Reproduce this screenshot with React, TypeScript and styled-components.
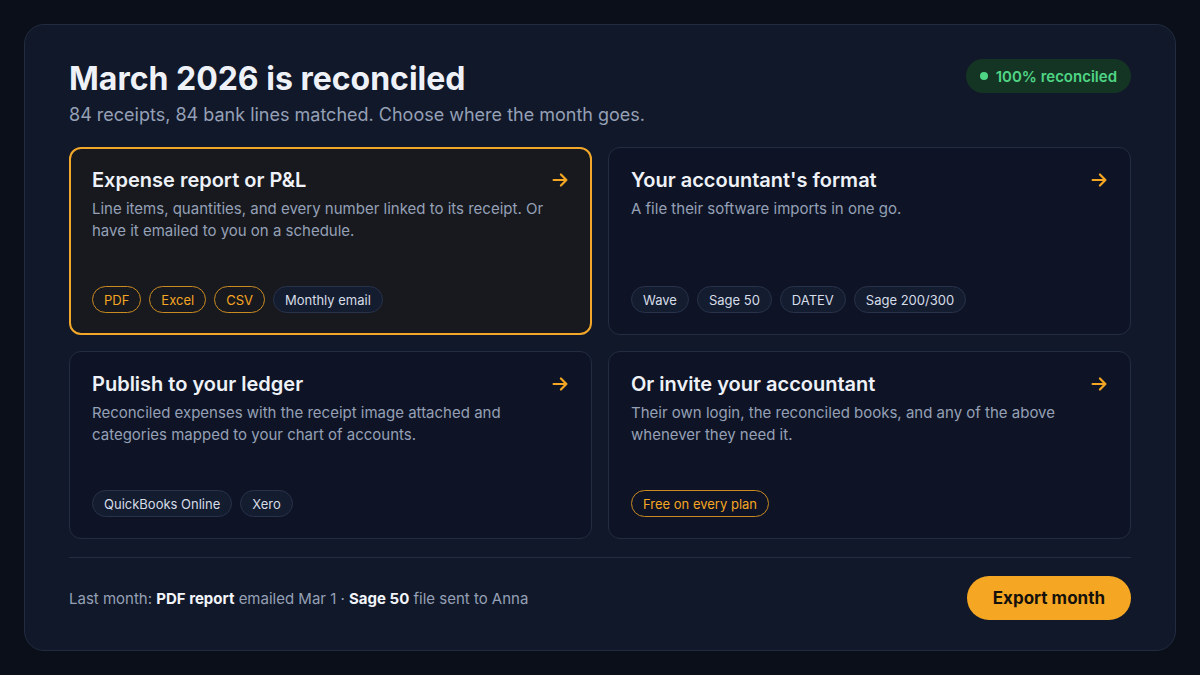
import styled, { createGlobalStyle } from "styled-components";

type Option = {
  title: string;
  text: string;
  chips: { label: string; accent?: boolean }[];
  active?: boolean;
};

const options: Option[] = [
  {
    title: "Expense report or P&L",
    text: "Line items, quantities, and every number linked to its receipt. Or have it emailed to you on a schedule.",
    chips: [
      { label: "PDF", accent: true },
      { label: "Excel", accent: true },
      { label: "CSV", accent: true },
      { label: "Monthly email" },
    ],
    active: true,
  },
  {
    title: "Your accountant's format",
    text: "A file their software imports in one go.",
    chips: [{ label: "Wave" }, { label: "Sage 50" }, { label: "DATEV" }, { label: "Sage 200/300" }],
  },
  {
    title: "Publish to your ledger",
    text: "Reconciled expenses with the receipt image attached and categories mapped to your chart of accounts.",
    chips: [{ label: "QuickBooks Online" }, { label: "Xero" }],
  },
  {
    title: "Or invite your accountant",
    text: "Their own login, the reconciled books, and any of the above whenever they need it.",
    chips: [{ label: "Free on every plan", accent: true }],
  },
];

export default function App() {
  return (
    <>
      <GlobalStyle />
      <Page>
        <Panel>
          <Header>
            <div>
              <Title>March 2026 is reconciled</Title>
              <Subtitle>84 receipts, 84 bank lines matched. Choose where the month goes.</Subtitle>
            </div>
            <Badge>
              <Dot />
              100% reconciled
            </Badge>
          </Header>

          <Grid>
            {options.map((o) => (
              <Card key={o.title} $active={o.active}>
                <CardTop>
                  <CardTitle>{o.title}</CardTitle>
                  <Arrow viewBox="0 0 24 24">
                    <path d="M5 12h14M13 6l6 6-6 6" />
                  </Arrow>
                </CardTop>
                <CardText>{o.text}</CardText>
                <Chips>
                  {o.chips.map((c) => (
                    <Chip key={c.label} $accent={c.accent}>
                      {c.label}
                    </Chip>
                  ))}
                </Chips>
              </Card>
            ))}
          </Grid>

          <Footer>
            <FootNote>
              Last month: <b>PDF report</b> emailed Mar 1 · <b>Sage 50</b> file sent to Anna
            </FootNote>
            <ExportButton>Export month</ExportButton>
          </Footer>
        </Panel>
      </Page>
    </>
  );
}

const GlobalStyle = createGlobalStyle`
  * { box-sizing: border-box; }
  body {
    margin: 0;
    background: #0a0f19;
    font-family: Inter, "Noto Sans", sans-serif;
    -webkit-font-smoothing: antialiased;
  }
`;

const Page = styled.div`
  width: 1200px;
  height: 675px;
  padding: 24px;
  background: #0a0f19;
`;

const Panel = styled.div`
  height: 627px;
  background: #111829;
  border: 1px solid #222c40;
  border-radius: 20px;
  padding: 34px 44px 30px;
  display: flex;
  flex-direction: column;
`;

const Header = styled.div`
  display: flex;
  justify-content: space-between;
  align-items: flex-start;
`;

const Title = styled.h1`
  margin: 0;
  font-size: 32px;
  line-height: 40px;
  font-weight: 700;
  color: #eef2f8;
`;

const Subtitle = styled.p`
  margin: 4px 0 0;
  font-size: 18px;
  line-height: 24px;
  color: #95a0b6;
`;

const Badge = styled.div`
  display: flex;
  align-items: center;
  gap: 8px;
  height: 34px;
  padding: 0 14px;
  border-radius: 17px;
  background: #153524;
  color: #4fd685;
  font-size: 15px;
  font-weight: 600;
`;

const Dot = styled.span`
  width: 8px;
  height: 8px;
  border-radius: 50%;
  background: #4fd685;
`;

const Grid = styled.div`
  margin-top: 20px;
  display: grid;
  grid-template-columns: 1fr 1fr;
  grid-auto-rows: 188px;
  gap: 16px;
`;

const Card = styled.div<{ $active?: boolean }>`
  display: flex;
  flex-direction: column;
  padding: ${(p) => (p.$active ? "19px 21px 20px" : "20px 22px 21px")};
  border-radius: 12px;
  background: ${(p) => (p.$active ? "#17191f" : "#0e1425")};
  border: ${(p) => (p.$active ? "2px solid #f2a72a" : "1px solid #232d42")};
`;

const CardTop = styled.div`
  display: flex;
  justify-content: space-between;
  align-items: center;
`;

const CardTitle = styled.h2`
  margin: 0;
  font-size: 20px;
  line-height: 24px;
  font-weight: 600;
  color: #eef2f8;
`;

const Arrow = styled.svg`
  width: 22px;
  height: 22px;
  fill: none;
  stroke: #f5a623;
  stroke-width: 2.4;
  stroke-linecap: round;
  stroke-linejoin: round;
  margin-right: -2px;
`;

const CardText = styled.p`
  margin: 6px 0 0;
  font-size: 15px;
  line-height: 22px;
  color: #95a0b6;
  max-width: 460px;
`;

const Chips = styled.div`
  margin-top: auto;
  display: flex;
  gap: 8px;
`;

const Chip = styled.span<{ $accent?: boolean }>`
  height: 27px;
  display: inline-flex;
  align-items: center;
  padding: 0 11px;
  border-radius: 14px;
  font-size: 13px;
  font-weight: 400;
  color: ${(p) => (p.$accent ? "#f5a623" : "#d6dce8")};
  background: ${(p) => (p.$accent ? "transparent" : "#141c2f")};
  border: 1px solid ${(p) => (p.$accent ? "#c98a22" : "#28324a")};
`;

const Footer = styled.div`
  margin-top: 18px;
  border-top: 1px solid #242e42;
  padding-top: 18px;
  display: flex;
  justify-content: space-between;
  align-items: center;
`;

const FootNote = styled.p`
  margin: 0;
  font-size: 15px;
  color: #95a0b6;
  b {
    color: #f1f4f9;
    font-weight: 700;
  }
`;

const ExportButton = styled.button`
  height: 44px;
  padding: 0 26px;
  border: none;
  border-radius: 22px;
  background: #f5a623;
  color: #15120c;
  font-family: Inter, "Noto Sans", sans-serif;
  font-size: 17px;
  font-weight: 700;
  cursor: pointer;
`;
